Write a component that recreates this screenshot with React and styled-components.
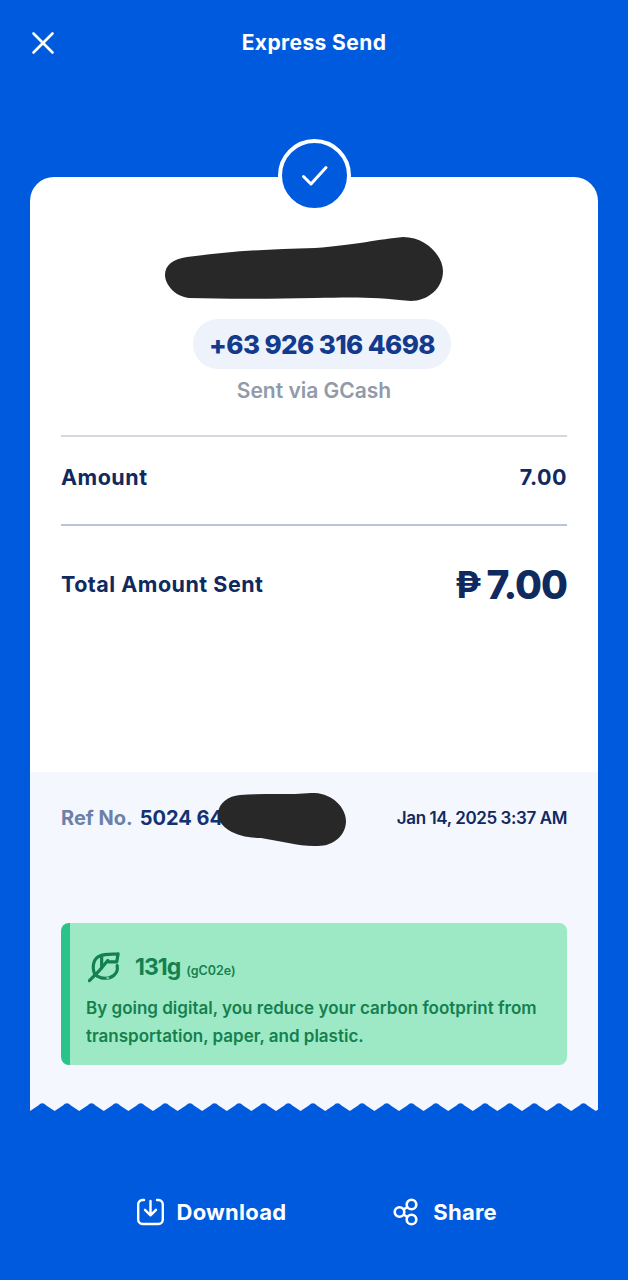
import styled, { createGlobalStyle } from "styled-components";

const BLUE = "#005add";
const NAVY = "#10295f";
const PANEL = "#f4f7fe";
const FONT = `"Inter", "Noto Sans", sans-serif`;

const GlobalStyle = createGlobalStyle`
  html, body {
    margin: 0;
    padding: 0;
    background: ${BLUE};
  }
  * {
    box-sizing: border-box;
  }
`;

const Screen = styled.div`
  width: 628px;
  height: 1280px;
  background: ${BLUE};
  font-family: ${FONT};
  overflow: hidden;
`;

const Header = styled.header`
  position: relative;
  height: 86px;
  display: flex;
  align-items: center;
  justify-content: center;
  color: #fff;
`;

const CloseButton = styled.button`
  position: absolute;
  left: 31px;
  top: 31px;
  width: 24px;
  height: 24px;
  padding: 0;
  border: 0;
  background: none;
  color: #fff;
`;

const Title = styled.h1`
  margin: 0;
  font-size: 21px;
  font-weight: 700;
  letter-spacing: 0.4px;
  line-height: 24px;
`;

const Receipt = styled.main`
  position: relative;
  width: 567.5px;
  margin: 91px 0 0 30px;
`;

const CheckBadge = styled.div`
  position: absolute;
  top: -38px;
  left: 248px;
  width: 73px;
  height: 73px;
  border-radius: 50%;
  background: ${BLUE};
  border: 4px solid #fff;
  display: flex;
  align-items: center;
  justify-content: center;
`;

const TopPanel = styled.section`
  height: 595px;
  background: #fff;
  border-radius: 24px 24px 0 0;
  padding: 60px 30.5px 0 31px;
  display: flex;
  flex-direction: column;
  align-items: center;
`;

const NameBlot = styled.svg`
  display: block;
  width: 278px;
  height: 64px;
  margin-right: 20px;
`;

const PhonePill = styled.div`
  margin: 18px 0 0 16px;
  width: 258px;
  height: 50px;
  border-radius: 25px;
  background: #eef2fb;
  color: #133a8c;
  font-size: 26px;
  font-weight: 800;
  letter-spacing: -0.6px;
  display: flex;
  align-items: center;
  justify-content: center;
`;

const Via = styled.div`
  margin-top: 9px;
  color: #9299a9;
  font-size: 21px;
  font-weight: 600;
  line-height: 26px;
`;

const Row = styled.div`
  width: 100%;
  display: flex;
  align-items: center;
  justify-content: space-between;
  margin-top: ${(p) => p.$top || 0}px;
  padding-bottom: ${(p) => p.$lift || 0}px;
  color: ${NAVY};
  font-weight: 700;
  font-size: 21.5px;
  letter-spacing: 0.5px;
  height: ${(p) => p.$height}px;
  border-top: 2px solid ${(p) => p.$line};
`;

const Total = styled.span`
  display: flex;
  align-items: center;
  gap: 5px;
  font-size: 39px;
  font-weight: 800;
  letter-spacing: -1px;
`;

const Peso = styled.span`
  font-size: 37px;
  font-weight: 700;
  letter-spacing: 0;
`;

const BottomPanel = styled.section`
  position: relative;
  height: 330px;
  background: ${PANEL};
  padding: 0 30.5px 0 31px;
`;

const RefRow = styled.div`
  height: 92px;
  display: flex;
  align-items: center;
  justify-content: space-between;
  color: ${NAVY};
`;

const RefLabel = styled.span`
  color: #6d81a8;
  font-size: 20px;
  font-weight: 700;
`;

const RefNumber = styled.span`
  margin-left: 7px;
  color: #133272;
  font-size: 20px;
  font-weight: 700;
`;

const DateText = styled.span`
  font-size: 17px;
  font-weight: 600;
  letter-spacing: -0.4px;
`;

const RefBlot = styled.svg`
  position: absolute;
  left: 186px;
  top: 21px;
  width: 130px;
  height: 54px;
`;

const CarbonCard = styled.div`
  margin-top: 59px;
  height: 142px;
  background: #9ee9c5;
  border-left: 9px solid #2ac48a;
  border-radius: 8px;
  padding: 26px 16px 0;
  color: #15804f;
`;

const CarbonHead = styled.div`
  display: flex;
  align-items: center;
  gap: 15px;
  margin-left: 2px;
  height: 36px;
`;

const Grams = styled.span`
  font-size: 23px;
  font-weight: 700;
  letter-spacing: -1px;
`;

const Unit = styled.span`
  margin-left: 6px;
  font-size: 12.5px;
  font-weight: 600;
  letter-spacing: 0;
`;

const CarbonText = styled.p`
  margin: 9px 0 0;
  font-size: 17px;
  font-weight: 600;
  line-height: 28px;
`;

const Edge = styled.svg`
  display: block;
  width: 567.5px;
  height: 9px;
`;

const Actions = styled.div`
  margin-top: 81px;
  height: 40px;
  display: flex;
  align-items: center;
  padding-left: 136.5px;
`;

const Action = styled.button`
  display: flex;
  align-items: center;
  gap: ${(p) => p.$gap}px;
  margin-right: ${(p) => p.$after || 0}px;
  padding: 0;
  border: 0;
  background: none;
  color: #fff;
  font-family: ${FONT};
  font-size: 22px;
  font-weight: 700;
  letter-spacing: 0.25px;
`;

// one scallop per 24.6px, light tips pointing down, blue crests rounded
function edgePath() {
  const step = 24.6;
  let d = "M0 0 L0 9";
  for (let x = 0; x < 567; x += step) {
    const mid = x + step / 2;
    d += ` L${mid - 4} 3.6 Q${mid} -1.2 ${mid + 4} 3.6 L${x + step} 9`;
  }
  return `${d} L567.5 0 Z`;
}

function CheckMark() {
  return (
    <svg width="30" height="24" viewBox="0 0 30 24" fill="none">
      <path d="M3.5 12.5 L11 20 L26 3.5" stroke="#fff" strokeWidth="3" strokeLinecap="round" strokeLinejoin="round" />
    </svg>
  );
}

function LeafIcon() {
  return (
    <svg width="32" height="33" viewBox="0 0 34 34" fill="none" stroke="#15804f" strokeWidth="3.4" strokeLinecap="round" strokeLinejoin="round">
      <path d="M1.5 31 L11 21.5 L21 9.5" />
      <path d="M14.5 6 V17.5" />
      <path d="M7.5 25 C3.5 16 6 7 13 4.5 C18 2.5 26 3 32 2.5 L30.5 11 H21.5" />
      <path d="M31 15 C32.5 24 25 30 14 28 L9.5 26" />
      <circle cx="21" cy="28" r="1.6" fill="#7fbfa2" stroke="none" />
    </svg>
  );
}

function DownloadIcon() {
  return (
    <svg width="27" height="28" viewBox="0 0 27 28" fill="none" stroke="#fff" strokeWidth="2.4" strokeLinecap="round" strokeLinejoin="round">
      <path d="M7 2 H5.5 A4.5 4.5 0 0 0 1.2 6.5 V21.5 A4.5 4.5 0 0 0 5.5 26 H21.5 A4.5 4.5 0 0 0 25.8 21.5 V6.5 A4.5 4.5 0 0 0 21.5 2 H20" />
      <path d="M13.5 3 V17 M8 11.8 L13.5 17.3 L19 11.8" />
    </svg>
  );
}

function ShareIcon() {
  return (
    <svg width="26" height="28" viewBox="0 0 26 28" fill="none" stroke="#fff" strokeWidth="2.6">
      <circle cx="6.5" cy="14" r="4.8" />
      <circle cx="18.5" cy="6.5" r="4.8" />
      <circle cx="18.5" cy="21.5" r="4.8" />
      <path d="M10.6 11.5 L14.4 9 M10.6 16.5 L14.4 19" />
    </svg>
  );
}

export default function App() {
  return (
    <Screen>
      <GlobalStyle />
      <Header>
        <CloseButton aria-label="Close">
          <svg width="24" height="24" viewBox="0 0 24 24" fill="none">
            <path d="M2.5 2.5 L21.5 21.5 M21.5 2.5 L2.5 21.5" stroke="#fff" strokeWidth="2.6" strokeLinecap="round" />
          </svg>
        </CloseButton>
        <Title>Express Send</Title>
      </Header>

      <Receipt>
        <CheckBadge>
          <CheckMark />
        </CheckBadge>

        <TopPanel>
          <NameBlot viewBox="0 0 278 64">
            <path
              d="M22 20 C60 15 100 12 150 11 C190 8 215 2 238 0 C262 0 278 20 278 34 C278 52 262 64 246 64 C210 60 190 60 150 61 C100 62 60 62 24 61 C8 59 0 46 0 38 C0 28 8 22 22 20 Z"
              fill="#282828"
            />
          </NameBlot>
          <PhonePill>+63 926 316 4698</PhonePill>
          <Via>Sent via GCash</Via>
          <Row $height={89} $top={31} $lift={8} $line="#d5d8df">
            <span>Amount</span>
            <span>7.00</span>
          </Row>
          <Row $height={118} $line="#b9c4d9">
            <span>Total Amount Sent</span>
            <Total>
              <Peso>₱</Peso>7.00
            </Total>
          </Row>
        </TopPanel>

        <BottomPanel>
          <RefRow>
            <span>
              <RefLabel>Ref No.</RefLabel>
              <RefNumber>5024 64</RefNumber>
            </span>
            <DateText>Jan 14, 2025 3:37 AM</DateText>
          </RefRow>
          <RefBlot viewBox="0 0 130 54">
            <path
              d="M24 2 C50 0 75 2 95 0 C115 -1 130 14 130 28 C130 42 118 53 102 53 C85 54 65 48 45 45 C22 45 2 36 2 20 C3 10 12 3 24 2 Z"
              fill="#282828"
            />
          </RefBlot>
          <CarbonCard>
            <CarbonHead>
              <LeafIcon />
              <Grams>
                131g<Unit>(gC02e)</Unit>
              </Grams>
            </CarbonHead>
            <CarbonText>
              By going digital, you reduce your carbon footprint from
              <br />
              transportation, paper, and plastic.
            </CarbonText>
          </CarbonCard>
        </BottomPanel>
        <Edge viewBox="0 0 567.5 9">
          <path d={edgePath()} fill={PANEL} />
        </Edge>
      </Receipt>

      <Actions>
        <Action $gap={13} $after={107}>
          <DownloadIcon />
          Download
        </Action>
        <Action $gap={14}>
          <ShareIcon />
          Share
        </Action>
      </Actions>
    </Screen>
  );
}
